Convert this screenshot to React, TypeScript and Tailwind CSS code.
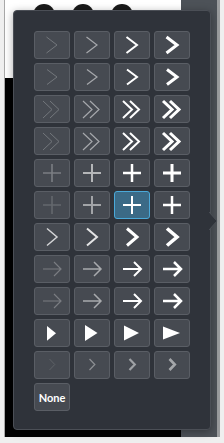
import React from 'react';

type Look = { c: string; w: number };

const thin: Look[] = [
  { c: '#73777c', w: 1 },
  { c: '#a6a8ac', w: 1.2 },
  { c: '#ffffff', w: 2 },
  { c: '#ffffff', w: 3 },
];

const plusA: Look[] = [
  { c: '#7b7e83', w: 1.6 },
  { c: '#b4b6b8', w: 2 },
  { c: '#ffffff', w: 2.5 },
  { c: '#ffffff', w: 3 },
];

const plusB: Look[] = [
  { c: '#64686d', w: 1.6 },
  { c: '#a2a4a7', w: 2 },
  { c: '#ffffff', w: 2 },
  { c: '#ffffff', w: 2.5 },
];

const bold: Look[] = [
  { c: '#d2d3d5', w: 1.5 },
  { c: '#e4e4e5', w: 2 },
  { c: '#ffffff', w: 3 },
  { c: '#ffffff', w: 3.6 },
];

const arrows: Look[] = [
  { c: '#7a7d82', w: 1.2 },
  { c: '#a8aaad', w: 1.5 },
  { c: '#ffffff', w: 2 },
  { c: '#ffffff', w: 2.5 },
];

const small: Look[] = [
  { c: '#5e6267', w: 1 },
  { c: '#8b8e92', w: 1.3 },
  { c: '#9ea1a5', w: 2.2 },
  { c: '#a4a7aa', w: 2.6 },
];

const triangles = [
  'M12 6 L21 13.3 L12 20.7Z',
  'M10 5 L22.5 13 L10 21Z',
  'M9 5.5 L24 13 L9 20.5Z',
  'M8 6.5 L25 13 L8 19.5Z',
];

type Row = { d: string; looks: Look[]; fill?: boolean };

const rows: Row[] = [
  { d: 'M11.5 5 L22 13 L11.5 21', looks: thin },
  { d: 'M12 5.5 L22 13 L12 20.5', looks: thin },
  { d: 'M8 5 L17 13.5 L8 22 M15 5 L24 13.5 L15 22', looks: thin },
  { d: 'M8 5 L17 13.5 L8 22 M15 5 L24 13.5 L15 22', looks: thin },
  { d: 'M8 13 H26 M17 4 V22', looks: plusA },
  { d: 'M8 13 H26 M17 4 V22', looks: plusB },
  { d: 'M12 4.5 L22 13 L12 21.5', looks: bold },
  { d: 'M8 13 H26 M19 6 L26 13 L19 20', looks: arrows },
  { d: 'M8 13 H26 M19 6 L26 13 L19 20', looks: arrows },
  { d: '', looks: thin, fill: true },
  { d: 'M14.5 7 L19.8 12.5 L14.5 18', looks: small },
];

function Glyph({ row, col }: { row: Row; col: number }) {
  const look = row.looks[col];
  return (
    <svg width="34" height="26" viewBox="0 0 34 26" className="block">
      {row.fill ? (
        <path d={triangles[col]} fill="#ffffff" />
      ) : (
        <path
          d={row.d}
          fill="none"
          stroke={look.c}
          strokeWidth={look.w}
          strokeLinejoin="miter"
          strokeLinecap="butt"
        />
      )}
    </svg>
  );
}

function Tile({ selected, children }: { selected?: boolean; children: React.ReactNode }) {
  return (
    <button
      className={
        selected
          ? 'w-9 h-7 flex items-center justify-center rounded-[3px] border border-[#4aa9d9] bg-[#3b6a86]'
          : 'w-9 h-7 flex items-center justify-center rounded-[3px] border border-[#5a5e65] bg-[#464a51]'
      }
    >
      {children}
    </button>
  );
}

export default function App() {
  return (
    <div className="relative w-[224px] h-[443px] overflow-hidden bg-[#efefef]">
      <div className="flex h-[437px] ml-[4px] border-l border-[#a8a8a8]">
        <div className="w-[176px] flex flex-col">
          <div className="h-[78px] bg-white flex gap-[17px] pl-[28px] pt-[4px]">
            <div className="w-[22px] h-[22px] rounded-full bg-[#1a1a1a]" />
            <div className="w-[22px] h-[22px] rounded-full bg-[#1a1a1a]" />
            <div className="w-[22px] h-[22px] rounded-full bg-[#1a1a1a]" />
          </div>
          <div className="flex-1 bg-black" />
        </div>
        <div className="w-[36px] bg-[#4d5258]" />
        <div className="w-[3px] bg-[#9a9c9e]" />
      </div>

      <div className="absolute left-[13px] top-[10px] w-[198px] rounded-[4px] border border-[#4b4f56] bg-[#2f333a] pl-5 pr-5 pt-5 pb-[18px] shadow-[0_2px_8px_rgba(0,0,0,0.35)]">
        <div className="grid grid-cols-4 gap-1">
          {rows.map((row, r) =>
            [0, 1, 2, 3].map((c) => (
              <Tile key={`${r}-${c}`} selected={r === 5 && c === 2}>
                <Glyph row={row} col={c} />
              </Tile>
            ))
          )}
          <Tile>
            <span className="text-[11px] font-bold text-white leading-none font-['Lato',_'Liberation_Sans',_sans-serif]">
              None
            </span>
          </Tile>
        </div>
        <svg
          width="9"
          height="18"
          viewBox="0 0 9 18"
          className="absolute top-[201px] left-[calc(100%-1px)]"
        >
          <path d="M0 0 L8 9 L0 18Z" fill="#2f333a" />
          <path d="M0 0 L8 9 L0 18" fill="none" stroke="#4b4f56" strokeWidth="1" />
        </svg>
      </div>
    </div>
  );
}
